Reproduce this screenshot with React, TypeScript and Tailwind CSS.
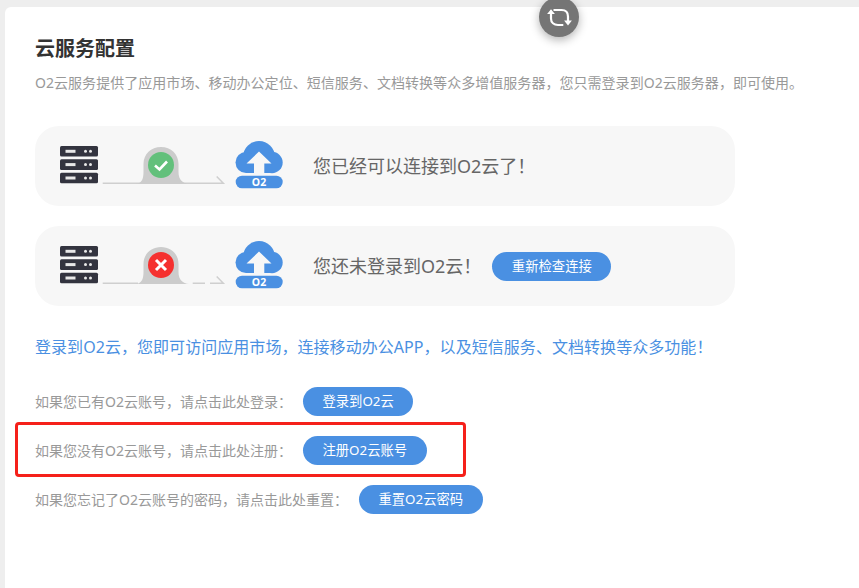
const FONT = "font-['Noto_Sans','Noto_Sans_CJK_SC',sans-serif]";

function Illustration({ ok }: { ok: boolean }) {
  return (
    <svg width="230" height="60" viewBox="0 0 230 60" className="shrink-0">
      {[10, 23.3, 36.7].map((y) => (
        <g key={y}>
          <rect x="0" y={y} width="38" height="10.6" rx="1.5" fill="#33343f" />
          <rect x="5.5" y={y + 3.8} width="10" height="3" fill="#e8e8e8" />
          <circle cx="25.5" cy={y + 5.3} r="1.5" fill="#e8e8e8" />
          <circle cx="30.5" cy={y + 5.3} r="1.5" fill="#e8e8e8" />
        </g>
      ))}
      {ok ? (
        <path d="M42.7 47.2H163.3L156.7 40.5" fill="none" stroke="#cfcfcf" strokeWidth="1.5" />
      ) : (
        <>
          <path d="M42.7 47.2H78M132.7 47.2H145" fill="none" stroke="#cfcfcf" strokeWidth="1.5" />
          <path d="M150 47.2H163.3L156.7 40.5" fill="none" stroke="#cfcfcf" strokeWidth="1.5" />
        </>
      )}
      <path
        d="M76 48C81 47.5 83.5 44 83.5 36V28C83.5 18 91 11 101 11C111 11 118.5 18 118.5 28V36C118.5 44 123 47.5 129 48Z"
        fill="#cccccc"
      />
      <circle cx="101" cy="29" r="13" fill={ok ? "#62c07b" : "#f5302f"} />
      {ok ? (
        <path d="M95 29.5L99.5 33.5L107 25.5" fill="none" stroke="#fff" strokeWidth="2.6" />
      ) : (
        <path d="M96 24L106 34M106 24L96 34" fill="none" stroke="#fff" strokeWidth="3" />
      )}
      <g fill="#4a90e2">
        <circle cx="199" cy="21" r="16" />
        <circle cx="186" cy="26.5" r="10.5" />
        <circle cx="212" cy="26.5" r="10.7" />
        <rect x="186" y="26" width="26" height="11" />
      </g>
      <path d="M199 15.5L211.5 27.5H204.3V38H194V27.5H186.5Z" fill="#f7f7f7" />
      <rect x="175.7" y="39.7" width="47" height="12.6" rx="6.3" fill="#4a90e2" />
      <text x="199" y="50" textAnchor="middle" fontSize="10.5" fontWeight="700" fill="#fff" fontFamily="'Noto Sans', sans-serif">
        O2
      </text>
    </svg>
  );
}

function StatusPanel({ ok, children }: { ok: boolean; children: React.ReactNode }) {
  return (
    <div className="flex h-20 w-[700px] items-center rounded-3xl bg-[#f7f7f7] pl-[25px]">
      <Illustration ok={ok} />
      <div className="ml-[23px] flex items-center gap-[11px]">{children}</div>
    </div>
  );
}

function PillButton({ children }: { children: React.ReactNode }) {
  return (
    <button className="h-[29px] rounded-full bg-[#4a90e2] px-[19.5px] text-[13.33px] leading-[29px] text-white">
      {children}
    </button>
  );
}

function ActionRow({ label, action }: { label: string; action: string }) {
  return (
    <div className="flex h-[29px] items-center gap-[11px] text-sm text-[#999999]">
      <span>{label}</span>
      <PillButton>{action}</PillButton>
    </div>
  );
}

export default function App() {
  return (
    <div className={`relative h-[588px] w-[859px] overflow-hidden bg-[#eeeeee] pl-[5px] pt-[7px] ${FONT}`}>
      <div className="h-full rounded-tl-md bg-white pl-[30px]">
        <h1 className="pt-[27px] text-xl font-bold leading-[30px] text-[#333333]">云服务配置</h1>
        <p className="mt-[9px] whitespace-nowrap text-sm leading-5 tracking-[0.04px] text-[#999999]">
          O2云服务提供了应用市场、移动办公定位、短信服务、文档转换等众多增值服务器，您只需登录到O2云服务器，即可使用。
        </p>
        <div className="mt-[33px] flex flex-col gap-5">
          <StatusPanel ok>
            <span className="text-lg text-[#666666]">您已经可以连接到O2云了！</span>
          </StatusPanel>
          <StatusPanel ok={false}>
            <span className="text-lg text-[#666666]">您还未登录到O2云！</span>
            <PillButton>重新检查连接</PillButton>
          </StatusPanel>
        </div>
        <p className="mt-[30px] whitespace-nowrap text-base leading-[22px] tracking-[0.05px] text-[#4a90e2]">
          登录到O2云，您即可访问应用市场，连接移动办公APP，以及短信服务、文档转换等众多功能！
        </p>
        <div className="mt-[29px] flex flex-col gap-5">
          <ActionRow label="如果您已有O2云账号，请点击此处登录：" action="登录到O2云" />
          <ActionRow label="如果您没有O2云账号，请点击此处注册：" action="注册O2云账号" />
          <ActionRow label="如果您忘记了O2云账号的密码，请点击此处重置：" action="重置O2云密码" />
        </div>
      </div>

      {/* refresh button sits over the top edge of the card */}
      <div className="absolute left-[539px] top-[-3px] flex h-10 w-10 items-center justify-center rounded-full bg-[#757575] shadow-[0_3px_10px_rgba(0,0,0,0.3)]">
        <svg width="24" height="24" viewBox="0 0 24 24" fill="none" stroke="#fff" strokeWidth="2.2" className="overflow-visible">
          <path d="M4 8V13.5C4 17.5 7 20 11 20H16.3" />
          <path d="M6.5 5H14.5C18.5 5 21 7.5 21 11.5V16" />
          <path d="M4 4.2L7.9 9H0.1Z" fill="#fff" stroke="none" />
          <path d="M21 20.4L17.1 15.6H24.9Z" fill="#fff" stroke="none" />
        </svg>
      </div>

      {/* red annotation box drawn over the screenshot */}
      <div className="absolute left-[15px] top-[422px] h-[55px] w-[451px] rounded-sm border-[3px] border-[#f5201a]" />
    </div>
  );
}
